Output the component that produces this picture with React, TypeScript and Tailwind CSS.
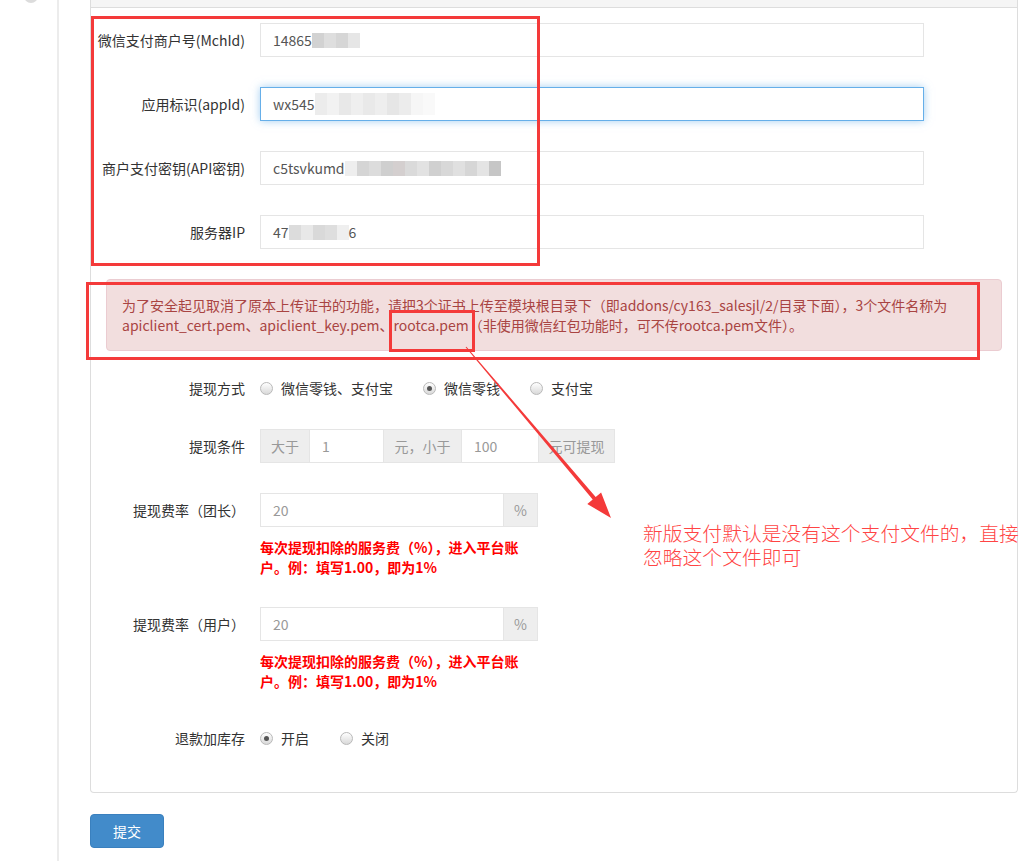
import type { ReactNode } from 'react';

const RED = 'border-[#f43a3a]';

function Mosaic({ cells, h = 'h-[15px]' }: { cells: string[]; h?: string }) {
  return (
    <span className="inline-flex items-center">
      {cells.map((c, i) => (
        <span key={i} className={`${c} ${h} inline-block w-[12px]`} />
      ))}
    </span>
  );
}

function Radio({ checked }: { checked?: boolean }) {
  return (
    <span className="flex h-[13px] w-[13px] items-center justify-center rounded-full border border-[#b9b9b9] bg-gradient-to-b from-white to-[#d9d9d9]">
      {checked && <span className="h-[5px] w-[5px] rounded-full bg-[#555]" />}
    </span>
  );
}

function Row({ label, children, className = '' }: { label: string; children: ReactNode; className?: string }) {
  return (
    <div className={`flex items-start ${className}`}>
      <div className="flex h-[34px] w-[154px] shrink-0 items-center justify-end whitespace-nowrap pr-[15px] text-[14px] text-[#333]">{label}</div>
      <div>{children}</div>
    </div>
  );
}

function TextBox({ focus, children }: { focus?: boolean; children: ReactNode }) {
  return (
    <div
      className={
        'flex h-[34px] w-[664px] items-center overflow-hidden border px-[12px] text-[14px] text-[#555] ' +
        (focus ? 'border-[#66afe9] shadow-[0_0_8px_rgba(102,175,233,0.6)]' : 'border-[#e5e5e5]')
      }
    >
      {children}
    </div>
  );
}

function Addon({ children, w }: { children: ReactNode; w: string }) {
  return (
    <div className={`flex h-[34px] ${w} items-center justify-center whitespace-nowrap border border-[#e5e5e5] bg-[#eee] text-[14px] text-[#999]`}>
      {children}
    </div>
  );
}

function Field({ children, w }: { children: ReactNode; w: string }) {
  return (
    <div className={`flex h-[34px] ${w} items-center border-y border-[#e5e5e5] bg-white px-[12px] text-[14px] text-[#999]`}>
      {children}
    </div>
  );
}

function RadioGroup({ items }: { items: { label: string; checked?: boolean; gap: string }[] }) {
  return (
    <div className="flex h-[34px] items-center whitespace-nowrap text-[14px] text-[#333]">
      {items.map((it) => (
        <label key={it.label} className={`flex items-center ${it.gap}`}>
          <Radio checked={it.checked} />
          <span className="ml-[8px]">{it.label}</span>
        </label>
      ))}
    </div>
  );
}

function Help() {
  return (
    <p className="mt-[10px] whitespace-nowrap text-[14px] font-bold leading-[20px] text-[#f00]">
      每次提现扣除的服务费（%），进入平台账
      <br />
      户。例：填写1.00，即为1%
    </p>
  );
}

export default function App() {
  return (
    <div className="relative flex h-[861px] w-[1031px] overflow-hidden bg-white font-['Noto_Sans_CJK_SC',sans-serif]">
      <aside className="h-full w-[59px] shrink-0 border-r-2 border-[#ececec]">
        <div className="ml-[24px] -mt-[11px] h-[14px] w-[14px] rounded-full bg-[#dcdcdc]" />
      </aside>

      <main className="pl-[31px]">
        <section className="w-[928px] rounded-b-[4px] border-x border-b border-[#ddd]">
          <div className="h-[8px] border-b border-[#ddd] bg-[#f5f5f5]" />
          <div className="px-[15px] pt-[15px] pb-[37px]">
            <Row label="微信支付商户号(MchId)" className="mb-[30px]">
              <TextBox>
                14865
                <Mosaic cells={['bg-[#d2d2d2]', 'bg-[#dedede]', 'bg-[#d6d6d6]', 'bg-[#e6e6e6]']} />
              </TextBox>
            </Row>
            <Row label="应用标识(appId)" className="mb-[30px]">
              <TextBox focus>
                wx545
                <Mosaic
                  h="h-[22px]"
                  cells={['bg-[#ececec]', 'bg-[#f2f2f2]', 'bg-[#e8e8e8]', 'bg-[#efefef]', 'bg-[#e9e9e9]', 'bg-[#eeeeee]', 'bg-[#e6e6e6]', 'bg-[#ececec]', 'bg-[#f6f6f6]', 'bg-[#f9f9f9]']}
                />
              </TextBox>
            </Row>
            <Row label="商户支付密钥(API密钥)" className="mb-[30px]">
              <TextBox>
                c5tsvkumd
                <Mosaic
                  cells={['bg-[#eeeeee]', 'bg-[#d5d5d5]', 'bg-[#dcdcdc]', 'bg-[#cfcfcf]', 'bg-[#d4cfcf]', 'bg-[#dadada]', 'bg-[#e2e2e2]', 'bg-[#d0d0d0]', 'bg-[#d8d8d8]', 'bg-[#e0e0e0]', 'bg-[#d6d6d6]', 'bg-[#e4e4e4]', 'bg-[#c6c6c6]']}
                />
              </TextBox>
            </Row>
            <Row label="服务器IP" className="mb-[30px]">
              <TextBox>
                47
                <Mosaic cells={['bg-[#dcdcdc]', 'bg-[#e8e8e8]', 'bg-[#d9d9d9]', 'bg-[#dedede]', 'bg-[#efefef]']} />
                6
              </TextBox>
            </Row>

            <div className="mb-[20px] whitespace-nowrap rounded-[4px] border border-[#ebccd1] bg-[#f2dede] p-[15px] text-[14px] leading-[20px] text-[#a94442]">
              为了安全起见取消了原本上传证书的功能，请把3个证书上传至模块根目录下（即addons/cy163_salesjl/2/目录下面），3个文件名称为
              <br />
              apiclient_cert.pem、apiclient_key.pem、rootca.pem（非使用微信红包功能时，可不传rootca.pem文件）。
            </div>

            <Row label="提现方式" className="mb-[24px]">
              <RadioGroup
                items={[
                  { label: '微信零钱、支付宝', gap: 'mr-[30px]' },
                  { label: '微信零钱', checked: true, gap: 'mr-[30px]' },
                  { label: '支付宝', gap: '' },
                ]}
              />
            </Row>

            <Row label="提现条件" className="mb-[30px]">
              <div className="flex">
                <Addon w="w-[50px]">大于</Addon>
                <Field w="w-[73px]">1</Field>
                <Addon w="w-[79px]">元，小于</Addon>
                <Field w="w-[76px]">100</Field>
                <Addon w="w-[77px]">元可提现</Addon>
              </div>
            </Row>

            <Row label="提现费率（团长）" className="mb-[30px]">
              <div className="flex">
                <div className="flex h-[34px] w-[243px] items-center border border-r-0 border-[#e5e5e5] px-[12px] text-[14px] text-[#999]">20</div>
                <Addon w="w-[35px]">%</Addon>
              </div>
              <Help />
            </Row>

            <Row label="提现费率（用户）" className="mb-[30px]">
              <div className="flex">
                <div className="flex h-[34px] w-[243px] items-center border border-r-0 border-[#e5e5e5] px-[12px] text-[14px] text-[#999]">20</div>
                <Addon w="w-[35px]">%</Addon>
              </div>
              <Help />
            </Row>

            <Row label="退款加库存">
              <RadioGroup
                items={[
                  { label: '开启', checked: true, gap: 'mr-[31px]' },
                  { label: '关闭', gap: '' },
                ]}
              />
            </Row>
          </div>
        </section>

        <button className="mt-[21px] h-[34px] w-[74px] rounded-[4px] border border-[#3a80be] bg-[#428bca] text-[14px] text-white">
          提交
        </button>
      </main>

      {/* annotations drawn over the screenshot */}
      <div className={`absolute left-[91px] top-[16px] h-[250px] w-[449px] border-[3px] ${RED}`} />
      <div className={`absolute left-[86px] top-[282px] h-[78px] w-[894px] border-[3px] ${RED}`} />
      <div className={`absolute left-[389px] top-[310px] h-[42px] w-[86px] border-[3px] ${RED}`} />
      <svg className="pointer-events-none absolute left-0 top-0" width="1031" height="861">
        <polygon
          fill="#f43a3a"
          points="465.6,347.3 466.4,346.7 595.7,496.9 601.1,492.4 611,518 587.3,504 592.7,499.5"
        />
      </svg>
      <p className="absolute left-[643px] top-[521px] whitespace-nowrap text-[19.8px] font-light leading-[24px] text-[#f44]">
        新版支付默认是没有这个支付文件的，直接
        <br />
        忽略这个文件即可
      </p>
    </div>
  );
}
